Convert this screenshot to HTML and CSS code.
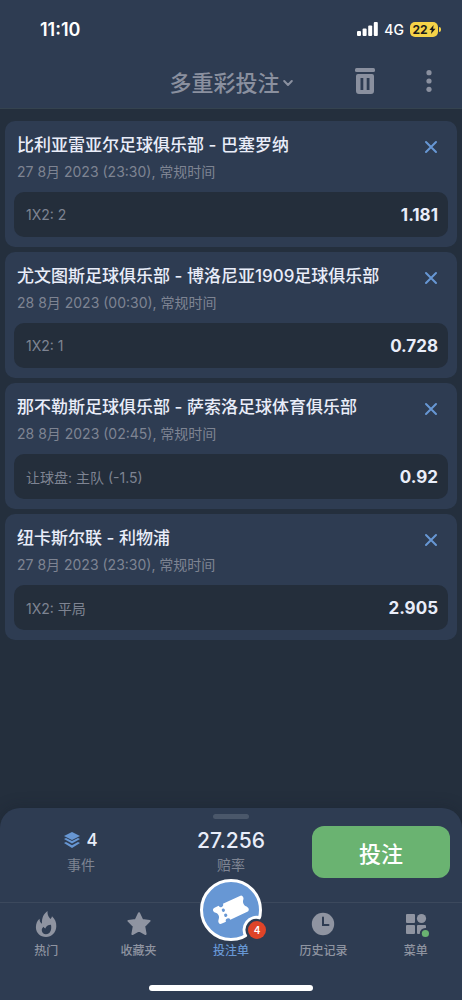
FILE: index.html
```html
<!DOCTYPE html>
<html lang="zh-CN">
<head>
  <meta charset="UTF-8">
  <meta name="viewport" content="width=device-width, initial-scale=1">
  <title>投注单</title>
  <link rel="stylesheet" href="styles.css">
</head>
<body>

<header class="top">
  <div class="status-bar">
    <span class="time">11:10</span>
    <div class="status-icons">
      <svg width="21" height="14" viewBox="0 0 21 14" fill="#fff" aria-hidden="true">
        <rect x="0" y="9" width="4" height="5" rx="1"/>
        <rect x="5.6" y="6.5" width="4" height="7.5" rx="1"/>
        <rect x="11.2" y="3.5" width="4" height="10.5" rx="1"/>
        <rect x="16.8" y="0" width="4" height="14" rx="1"/>
      </svg>
      <span class="network">4G</span>
      <span class="battery">22<svg width="7" height="9" viewBox="0 0 7 9" aria-hidden="true"><path d="M4.6 0 0.4 5h2.3L2 9l4.5-5.2H4.1z" fill="#1b1b1b"/></svg></span>
    </div>
  </div>
  <div class="toolbar">
    <button class="title" type="button">多重彩投注
      <svg width="10" height="12" viewBox="0 0 10 12" aria-hidden="true"><path d="M1.200 6 5 10l3.800-4" fill="none" stroke="currentColor" stroke-width="2" stroke-linecap="round" stroke-linejoin="round"/></svg>
    </button>
    <div class="actions">
      <button class="icon-btn" type="button" aria-label="删除">
        <svg width="20" height="26" viewBox="0 0 20 26" fill="currentColor" aria-hidden="true">
          <rect x="0" y="0" width="20" height="4" rx="1.5"/>
          <path fill-rule="evenodd" d="M3 6h14a2 2 0 0 1 2 2v15a3 3 0 0 1-3 3H4a3 3 0 0 1-3-3V8a2 2 0 0 1 2-2zM5.500 10v12h2.800V10zM11.700 10v12h2.800V10z"/>
        </svg>
      </button>
      <button class="icon-btn" type="button" aria-label="更多">
        <svg width="6" height="22" viewBox="0 0 6 22" fill="currentColor" aria-hidden="true"><circle cx="3" cy="2.700" r="2.600"/><circle cx="3" cy="11" r="2.600"/><circle cx="3" cy="19.300" r="2.600"/></svg>
      </button>
    </div>
  </div>
</header>

<main class="bets">
  <article class="card">
    <div class="card-head">
      <h2>比利亚雷亚尔足球俱乐部 - 巴塞罗纳</h2>
      <button class="remove" type="button" aria-label="移除"><svg width="14" height="14" viewBox="0 0 14 14" aria-hidden="true"><path d="M2 2l10 10M12 2 2 12"/></svg></button>
    </div>
    <p class="date">27 8月 2023 (23:30), 常规时间</p>
    <div class="pick"><span>1X2: 2</span><strong>1.181</strong></div>
  </article>

  <article class="card">
    <div class="card-head">
      <h2>尤文图斯足球俱乐部 - 博洛尼亚1909足球俱乐部</h2>
      <button class="remove" type="button" aria-label="移除"><svg width="14" height="14" viewBox="0 0 14 14" aria-hidden="true"><path d="M2 2l10 10M12 2 2 12"/></svg></button>
    </div>
    <p class="date">28 8月 2023 (00:30), 常规时间</p>
    <div class="pick"><span>1X2: 1</span><strong>0.728</strong></div>
  </article>

  <article class="card">
    <div class="card-head">
      <h2>那不勒斯足球俱乐部 - 萨索洛足球体育俱乐部</h2>
      <button class="remove" type="button" aria-label="移除"><svg width="14" height="14" viewBox="0 0 14 14" aria-hidden="true"><path d="M2 2l10 10M12 2 2 12"/></svg></button>
    </div>
    <p class="date">28 8月 2023 (02:45), 常规时间</p>
    <div class="pick"><span>让球盘: 主队 (-1.5)</span><strong>0.92</strong></div>
  </article>

  <article class="card">
    <div class="card-head">
      <h2>纽卡斯尔联 - 利物浦</h2>
      <button class="remove" type="button" aria-label="移除"><svg width="14" height="14" viewBox="0 0 14 14" aria-hidden="true"><path d="M2 2l10 10M12 2 2 12"/></svg></button>
    </div>
    <p class="date">27 8月 2023 (23:30), 常规时间</p>
    <div class="pick"><span>1X2: 平局</span><strong>2.905</strong></div>
  </article>
</main>

<footer class="sheet">
  <div class="handle"></div>
  <div class="summary">
    <div class="stat">
      <div class="value events">
        <svg width="16" height="16" viewBox="0 0 16 16" fill="#6797d4" aria-hidden="true">
          <path d="M8 0l8 4-8 4-8-4z"/>
          <path d="M0 7l2-1 6 3 6-3 2 1-8 4.500z"/>
          <path d="M0 11l2-1 6 3.200 6-3.200 2 1-8 5z"/>
        </svg>
        4
      </div>
      <div class="caption">事件</div>
    </div>
    <div class="stat odds">
      <div class="value">27.256</div>
      <div class="caption">赔率</div>
    </div>
    <button class="bet-btn" type="button">投注</button>
  </div>

  <nav class="tabs">
    <a class="tab" href="#">
      <svg width="26" height="28" viewBox="0 0 26 28" fill="currentColor" aria-hidden="true">
        <path fill-rule="evenodd" d="M14.500 1c-.2 4.300 1.300 6 3 8C18.300 8.200 18.800 7.400 19 6.300 22 9 23.500 12.500 23.300 16.500 23 22.600 18.700 27 13 27S2.900 22.900 2.900 17.200c0-3.500 1.400-6.500 3.700-8.400-.1 2.200.6 3.900 2.400 5C8.600 8 10.500 4 14.500 1zM18 14.700c-3 .1-5 1.300-5.700 3.800-.8-.3-1.400-.9-1.800-1.700-1.300 1.200-1.800 2.400-1.700 3.700.2 2.300 1.900 3.700 4.200 3.700 3.900 0 6-4 5-9.500z"/>
      </svg>
      <span>热门</span>
    </a>
    <a class="tab" href="#">
      <svg width="26" height="28" viewBox="0 0 26 28" aria-hidden="true">
        <path d="M13 3.200l3.200 6.800 7.400.9-5.400 5.300 1.400 7.800-6.600-3.600-6.600 3.600 1.400-7.800-5.400-5.300 7.400-.9z" fill="currentColor" stroke="currentColor" stroke-width="2" stroke-linejoin="round"/>
      </svg>
      <span>收藏夹</span>
    </a>
    <a class="tab active" href="#">
      <span class="ticket">
        <svg width="36" height="36" viewBox="0 0 36 36" fill="#fff" aria-hidden="true">
          <g transform="rotate(-25 18 18)">
            <path d="M4 9h4.500a2.400 2.400 0 0 0 4.800 0H32a2.500 2.500 0 0 1 2.500 2.500c0 2.500-2.500 2.500-2.500 6s2.500 3.500 2.500 6A2.500 2.500 0 0 1 32 26.500H13.300a2.400 2.400 0 0 0-4.800 0H4A2.500 2.500 0 0 1 1.500 24c0-2.500 3-3 3-6.500s-3-3.500-3-6A2.500 2.500 0 0 1 4 9z"/>
            <g fill="#6797d4">
              <rect x="9.500" y="13.200" width="3" height="3.400" rx="1.400"/>
              <rect x="9.500" y="18.800" width="3" height="3.400" rx="1.400"/>
            </g>
          </g>
        </svg>
        <!-- white rim that curves in around the counter -->
        <svg class="notch" width="62" height="62" viewBox="0 0 62 62" aria-hidden="true">
          <circle cx="57" cy="51" r="12" fill="#2e3c52"/>
          <path d="M60.500 39a12.500 12.500 0 0 0-14.500 18.500" fill="none" stroke="#fff" stroke-width="3"/>
        </svg>
        <span class="count">4</span>
      </span>
      <span>投注单</span>
    </a>
    <a class="tab" href="#">
      <svg width="26" height="28" viewBox="0 0 26 28" aria-hidden="true">
        <circle cx="13" cy="14" r="11.200" fill="currentColor"/>
        <path d="M13 7.500V15h5.500" fill="none" stroke="#2e3c52" stroke-width="2" stroke-linecap="round"/>
      </svg>
      <span>历史记录</span>
    </a>
    <a class="tab" href="#">
      <svg width="26" height="28" viewBox="0 0 26 28" fill="currentColor" aria-hidden="true">
        <rect x="3" y="4" width="9" height="9" rx="1"/>
        <circle cx="18.500" cy="8.500" r="4.600"/>
        <rect x="3" y="15" width="9" height="9" rx="1"/>
        <rect x="14" y="15" width="9" height="9" rx="1"/>
        <circle cx="22.400" cy="23.500" r="5.600" fill="#2e3c52"/>
        <circle cx="22.400" cy="23.500" r="3.600" fill="#6ab371"/>
      </svg>
      <span>菜单</span>
    </a>
  </nav>
  <div class="home-bar"></div>
</footer>

</body>
</html>
```
FILE: styles.css
```css
* {
  box-sizing: border-box;
}

body {
  margin: 0;
  min-height: 100vh;
  display: flex;
  flex-direction: column;
  background: #242f3d;
  color: #e9edf9;
  font-family: Inter, "Noto Sans CJK SC", sans-serif;
}

button {
  padding: 0;
  border: none;
  background: none;
  color: inherit;
  font-family: inherit;
  cursor: pointer;
}

svg {
  display: block;
  flex-shrink: 0;
}

/* Header */
.top {
  background: #2e3c52;
  border-bottom: 1px solid #35434f;
  color: #8a909f;
}

.status-bar {
  display: flex;
  justify-content: space-between;
  align-items: center;
  height: 54px;
  padding: 4px 24px 0 40px;
  color: #fff;
}

.time {
  font-size: 18px;
  font-weight: 600;
}

.status-icons {
  display: flex;
  align-items: center;
  gap: 6px;
}

.network {
  font-size: 14px;
  font-weight: 500;
}

.battery {
  position: relative;
  display: flex;
  align-items: center;
  justify-content: center;
  gap: 1px;
  width: 28px;
  height: 15px;
  border-radius: 5px;
  background: #f5d348;
  color: #1b1b1b;
  font-size: 12px;
  font-weight: 700;
}

.battery::after {
  content: "";
  position: absolute;
  right: -3px;
  top: 5px;
  width: 2px;
  height: 5px;
  border-radius: 0 2px 2px 0;
  background: #f5d348;
}

.toolbar {
  display: grid;
  grid-template-columns: 1fr auto 1fr;
  align-items: center;
  height: 54px;
}

.title {
  grid-column: 2;
  display: flex;
  align-items: center;
  gap: 3px;
  font-size: 22px;
  font-weight: 500;
}

.actions {
  display: flex;
  justify-content: flex-end;
  gap: 42px;
  padding-right: 22px;
}

.icon-btn {
  display: flex;
  align-items: center;
  justify-content: center;
  min-width: 22px;
}

/* Bet cards */
.bets {
  flex: 1;
  display: flex;
  flex-direction: column;
  gap: 5px;
  padding: 12px 5px;
}

.card {
  padding: 12px 9px 10px;
  border-radius: 10px;
  background: #2e3c52;
}

.card-head {
  display: flex;
  justify-content: space-between;
  align-items: flex-end;
  padding: 0 10px 0 3px;
}

.card h2 {
  margin: 0;
  font-size: 17px;
  font-weight: 500;
  line-height: 24px;
}

.remove {
  padding-bottom: 3px;
}

.remove svg {
  fill: none;
  stroke: #6797d4;
  stroke-width: 2;
  stroke-linecap: round;
}

.date {
  margin: 4px 3px 9px;
  color: #7e8492;
  font-size: 14px;
  line-height: 22px;
}

.pick {
  display: flex;
  justify-content: space-between;
  align-items: center;
  height: 45px;
  padding: 0 10px 0 12px;
  border-radius: 10px;
  background: #242e3b;
}

.pick span {
  color: #7e8492;
  font-size: 14px;
}

.pick strong {
  font-size: 17px;
  font-weight: 700;
}

/* Bottom sheet */
.sheet {
  padding: 6px 0 9px;
  border-radius: 20px 20px 0 0;
  background: #2e3c52;
  box-shadow: 0 0 16px rgba(20, 28, 40, 0.3);
}

.handle {
  width: 36px;
  height: 5px;
  margin: 0 auto 7px;
  border-radius: 3px;
  background: #4a576a;
}

.summary {
  display: grid;
  grid-template-columns: 27fr 25fr 23fr;
  padding: 0 12px 24px 0;
}

.stat {
  text-align: center;
}

.odds {
  padding-right: 12px;
}

.value {
  display: flex;
  align-items: center;
  justify-content: center;
  gap: 6px;
  height: 28px;
  font-size: 21px;
  font-weight: 500;
}

.events {
  font-size: 17px;
}

.caption {
  color: #7e8492;
  font-size: 14px;
  line-height: 22px;
}

.bet-btn {
  height: 52px;
  border-radius: 12px;
  background: #6ab371;
  color: #fff;
  font-size: 22px;
  font-weight: 500;
}

/* Tabs */
.tabs {
  display: grid;
  grid-template-columns: repeat(5, 1fr);
  border-top: 1px solid #3c495d;
}

.tab {
  position: relative;
  display: flex;
  flex-direction: column;
  align-items: center;
  justify-content: flex-end;
  gap: 4px;
  height: 57px;
  color: #8f94a1;
  font-size: 12px;
  font-weight: 500;
  line-height: 18px;
  text-decoration: none;
}

.active {
  color: #6797d4;
}

.ticket {
  position: absolute;
  bottom: 19px;
  display: flex;
  align-items: center;
  justify-content: center;
  width: 62px;
  height: 62px;
  border: 3px solid #fff;
  border-radius: 50%;
  background: #6797d4;
}

.notch {
  position: absolute;
  top: -3px;
  left: -3px;
}

.count {
  position: absolute;
  right: -7px;
  bottom: -1px;
  width: 18px;
  height: 18px;
  border-radius: 50%;
  background: #df4428;
  color: #fff;
  font-size: 10px;
  font-weight: 600;
  text-align: center;
}

.home-bar {
  width: 164px;
  height: 6px;
  margin: 25px auto 0;
  border-radius: 3px;
  background: #fff;
}
```
